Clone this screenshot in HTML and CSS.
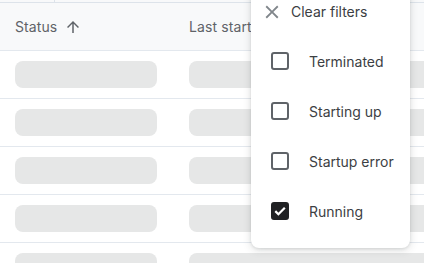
FILE: index.html
```html
<!DOCTYPE html>
<html>
<head>
<meta charset="utf-8">
<link rel="stylesheet" href="styles.css">
</head>
<body>
<div class="page">
  <div class="topstrip"><span class="divider"></span></div>
  <div class="table">
    <div class="row head">
      <div class="cell c1"><span class="htext">Status</span>
        <svg class="arrow" viewBox="0 0 24 24" width="18" height="18"><path d="M4 12l1.41 1.41L11 7.83V20h2V7.83l5.58 5.59L20 12l-8-8-8 8z" fill="#5f6368"/></svg>
      </div>
      <div class="cell c2"><span class="htext">Last started</span></div>
    </div>
    <div class="row"><div class="cell c1"><div class="sk"></div></div><div class="cell c2"><div class="sk wide"></div></div></div>
    <div class="row"><div class="cell c1"><div class="sk"></div></div><div class="cell c2"><div class="sk wide"></div></div></div>
    <div class="row"><div class="cell c1"><div class="sk"></div></div><div class="cell c2"><div class="sk wide"></div></div></div>
    <div class="row"><div class="cell c1"><div class="sk"></div></div><div class="cell c2"><div class="sk wide"></div></div></div>
    <div class="row"><div class="cell c1"><div class="sk"></div></div><div class="cell c2"><div class="sk wide"></div></div></div>
  </div>
  <div class="menu">
    <div class="item clear">
      <svg class="x" viewBox="0 0 24 24" width="22" height="22"><path d="M19 6.41L17.59 5 12 10.59 6.41 5 5 6.41 10.59 12 5 17.59 6.41 19 12 13.41 17.59 19 19 17.59 13.41 12z" fill="#80868b"/></svg>
      <span class="clabel">Clear filters</span>
    </div>
    <div class="item"><span class="box"></span><span class="label">Terminated</span></div>
    <div class="item"><span class="box"></span><span class="label">Starting up</span></div>
    <div class="item"><span class="box"></span><span class="label">Startup error</span></div>
    <div class="item"><span class="box checked"><svg viewBox="0 0 18 18" width="18" height="18"><path d="M4.3 9.1l3.1 3.1 6.4-6.5" fill="none" stroke="#fff" stroke-width="2.2"/></svg></span><span class="label">Running</span></div>
  </div>
</div>
</body>
</html>
```

FILE: styles.css
```css
* { box-sizing: border-box; }
html, body { margin: 0; padding: 0; background: #fff; }
body { font-family: Inter, "Noto Sans", sans-serif; width: 424px; height: 263px; overflow: hidden; }
.page { position: relative; width: 424px; height: 263px; overflow: hidden; }
.topstrip { height: 3px; border-bottom: 1px solid #dde3ea; background: #f8f9fa; padding-left: 54px; }
.divider { display: block; width: 1px; height: 2px; background: #dde3ea; }
.table { display: flex; flex-direction: column; }
.row { display: flex; height: 48px; border-bottom: 1px solid #e3e8ee; }
.row.head { background: #f8f9fa; }
.cell { display: flex; align-items: center; }
.c1 { flex: none; width: 174px; padding-left: 15px; }
.c2 { flex: 1; min-width: 0; padding-left: 15px; overflow: hidden; }
.htext { font-size: 14px; color: #5f6368; letter-spacing: 0.1px; white-space: nowrap; }
.arrow { margin-left: 7px; }
.sk { flex: none; width: 142px; height: 27px; background: #e6e7e7; border-radius: 8px; }
.sk.wide { width: 300px; }
.menu { position: absolute; left: 251px; top: -13px; width: 159px; background: #fff; border-radius: 8px; box-shadow: 0 2px 8px rgba(60,64,67,0.18), 0 1px 3px rgba(60,64,67,0.12); padding-bottom: 12px; display: flex; flex-direction: column; }
.item { height: 50px; display: flex; align-items: center; padding-left: 20px; }
.item.clear { height: 49px; padding-left: 10px; }
.x { flex: none; }
.clabel { margin-left: 8px; font-size: 14px; color: #3c4043; }
.box { flex: none; width: 18px; height: 18px; border: 2px solid #5f6368; border-radius: 3px; display: flex; align-items: center; justify-content: center; }
.box.checked { background: #202124; border-color: #202124; }
.box.checked svg { flex: none; margin: -2px; }
.label { margin-left: 20px; font-size: 14px; color: #3c4043; }
```
